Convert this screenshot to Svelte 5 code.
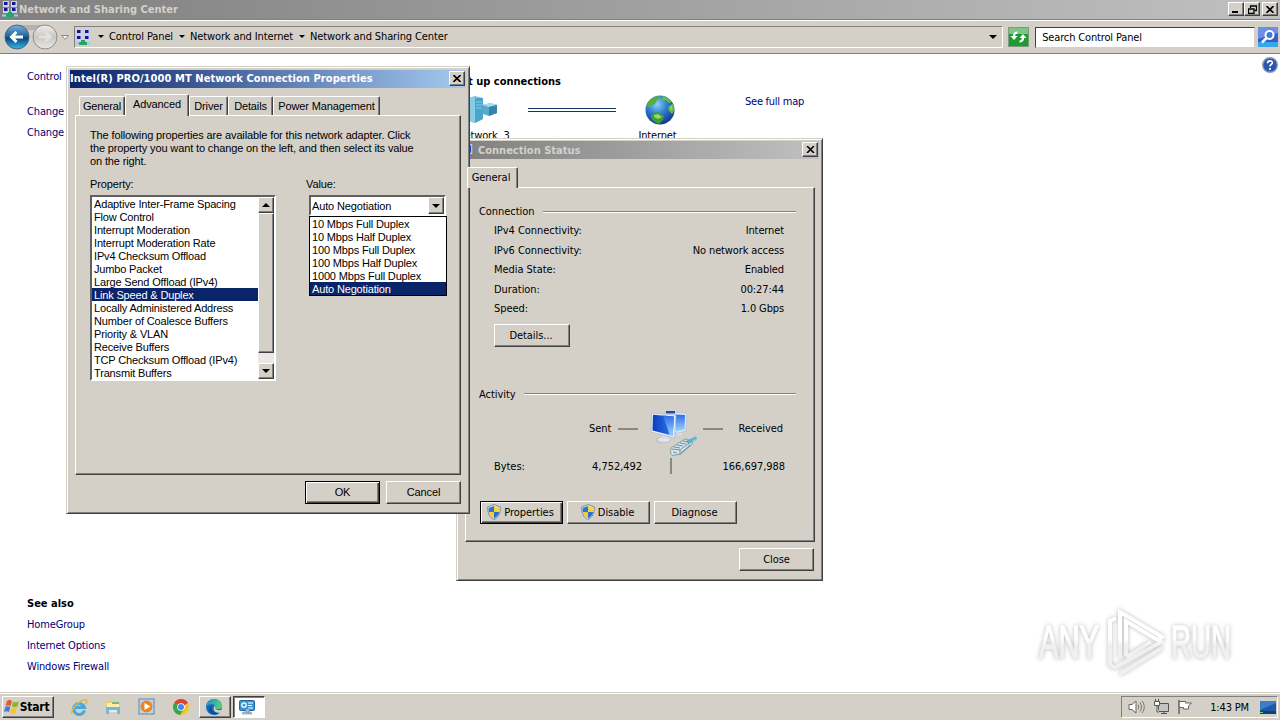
<script>
  const crumbs = ['Control Panel', 'Network and Internet', 'Network and Sharing Center']

  const tabs = ['General', 'Advanced', 'Driver', 'Details', 'Power Management']

  const adapterProps = [
    'Adaptive Inter-Frame Spacing',
    'Flow Control',
    'Interrupt Moderation',
    'Interrupt Moderation Rate',
    'IPv4 Checksum Offload',
    'Jumbo Packet',
    'Large Send Offload (IPv4)',
    'Link Speed & Duplex',
    'Locally Administered Address',
    'Number of Coalesce Buffers',
    'Priority & VLAN',
    'Receive Buffers',
    'TCP Checksum Offload (IPv4)',
    'Transmit Buffers'
  ]

  const speeds = [
    '10 Mbps Full Duplex',
    '10 Mbps Half Duplex',
    '100 Mbps Full Duplex',
    '100 Mbps Half Duplex',
    '1000 Mbps Full Duplex',
    'Auto Negotiation'
  ]

  const connection = [
    ['IPv4 Connectivity:', 'Internet'],
    ['IPv6 Connectivity:', 'No network access'],
    ['Media State:', 'Enabled'],
    ['Duration:', '00:27:44'],
    ['Speed:', '1.0 Gbps']
  ]

  let tab = $state('Advanced')
  let selected = $state('Link Speed & Duplex')
  let speed = $state('Auto Negotiation')
</script>

{#snippet closeGlyph()}
  <svg width="8" height="7" viewBox="0 0 8 7"><path d="M.5 0 7.5 7M7.5 0 .5 7" stroke="#000" stroke-width="1.6" /></svg>
{/snippet}

{#snippet arrow(up = false)}
  <svg class:up width="8" height="4" viewBox="0 0 8 4"><path d="M0 0h8L4 4z" /></svg>
{/snippet}

{#snippet networkIcon(size)}
  <svg width={size} height={size} viewBox="0 0 16 16">
    <path d="M1 0h6v6H1zM9 0h6v6H9zM1 7h6v5H1zM9 7h6v5H9z" fill="#ccd3e4" />
    <path d="M2 1h3v3H2zM10 1h3v3h-3zM2 7h3v3H2zM10 7h3v3h-3z" fill="#12129b" />
    <path d="M5 1h1v3H5zM13 1h1v3h-1zM5 7h1v3H5zM13 7h1v3h-1z" fill="#5f6fe0" />
    <path d="M6 11h4v2h2v3H4v-3h2z" fill="#23a768" />
    <path d="M0 14.500h4M12 14.500h4" stroke="#8cd7dd" stroke-width="2" />
  </svg>
{/snippet}

{#snippet shield()}
  <svg width="14" height="16" viewBox="0 0 14 16">
    <path d="M7 .5 13.3 3c.2 6-1.6 10.300-6.300 12.500C2.300 13.300.5 9 .7 3z" fill="#dfe6ee" stroke="#748ba8" />
    <path d="M7 2v6H1.800C1.600 6.500 1.700 5 1.700 3.900z" fill="#2f74cf" />
    <path d="M7 2v6h5.200c.2-1.500.1-3 .1-4.100z" fill="#f5d43b" />
    <path d="M7 8v6.400C4.200 13 2.300 11 1.800 8z" fill="#f5cc2e" />
    <path d="M7 8v6.400C9.800 13 11.700 11 12.200 8z" fill="#2c6fca" />
  </svg>
{/snippet}

<div class="desktop">
  <header class="titlebar main-title">
    {@render networkIcon(16)}
    <span>Network and Sharing Center</span>
    <div class="caption">
      <button aria-label="Minimize"><svg class="min" width="8" height="8" viewBox="0 0 8 8"><path d="M0 6h6v2H0z" /></svg></button>
      <button aria-label="Restore">
        <svg width="9" height="9" viewBox="0 0 9 9"><path d="M2.500 3V1h6v4.500H6.500M2 1h7" fill="none" stroke="#000" stroke-width="1.300" /><path d="M.5 4h5.500v4.500H.5zM0 4h6.500" fill="none" stroke="#000" stroke-width="1.300" /></svg>
      </button>
      <button class="gap" aria-label="Close">{@render closeGlyph()}</button>
    </div>
  </header>

  <nav class="toolbar">
    <svg class="travel" width="68" height="30" viewBox="0 0 68 30">
      <defs>
        <linearGradient id="back" x2="0" y2="1"><stop stop-color="#7ab3d9" /><stop offset=".45" stop-color="#24679f" /><stop offset=".55" stop-color="#0a477f" /><stop offset="1" stop-color="#35bce6" /></linearGradient>
        <linearGradient id="fwd" x2="0" y2="1"><stop stop-color="#efeeec" /><stop offset=".5" stop-color="#c9c7c3" /><stop offset="1" stop-color="#e9e8e6" /></linearGradient>
      </defs>
      <path d="M16 3h30v5H16z" fill="#b4b2ae" />
      <circle cx="16" cy="15" r="12" fill="url(#back)" stroke="#46637f" />
      <path d="M22 15H11M15.500 10 10.500 15l5 5" fill="none" stroke="#fff" stroke-width="3" />
      <circle cx="44" cy="15" r="12" fill="url(#fwd)" stroke="#8f8d8a" />
      <path d="M38 15h10M44.500 10.500l5 4.500-5 4.500" fill="none" stroke="#e3e1de" stroke-width="2.500" />
      <path d="M60.500 13.500h7L64 17.500z" fill="#f6f5f3" stroke="#8b8986" />
    </svg>
    <div class="address">
      {@render networkIcon(16)}
      {#each crumbs as crumb}
        <i>{@render arrow()}</i><span>{crumb}</span>
      {/each}
      <i class="drop">{@render arrow()}</i>
    </div>
    <svg class="refresh" width="21" height="20" viewBox="0 0 21 20">
      <rect x=".5" y=".5" width="20" height="19" fill="#1f9a30" stroke="#7d9a80" />
      <path d="M1 1h19v6H1z" fill="#7cc585" />
      <path d="M9.500 5.500C7 5.500 6 7 6 9.500M11.500 14.500c2.500 0 3.500-1.500 3.500-4" fill="none" stroke="#fff" stroke-width="2.200" />
      <path d="M2.500 9h7L6 13zM11.500 11h7L15 7z" fill="#fff" />
    </svg>
    <div class="search">Search Control Panel</div>
    <svg class="go" width="20" height="20" viewBox="0 0 20 20">
      <rect width="20" height="20" fill="#2e5fd3" /><path d="M0 0h20v6L0 12z" fill="#6b8fe4" /><path d="M0 20h20v-5H0z" fill="#36a8ea" />
      <circle cx="11.500" cy="8" r="4" fill="#3f78d8" stroke="#fff" stroke-width="2" /><path d="m8.500 11-4.500 4.500" stroke="#fff" stroke-width="2.500" />
    </svg>
  </nav>

  <main class="content">
    <aside>
      <a class="home" href="#home">Control</a>
      <a href="#adapter">Change</a>
      <a href="#sharing">Change</a>
      <h2>See also</h2>
      <a href="#homegroup">HomeGroup</a>
      <a href="#options">Internet Options</a>
      <a href="#firewall">Windows Firewall</a>
    </aside>
    <section class="overview">
      <h1>set up connections</h1>
      <div class="map">
        <figure class="net">
          <svg width="40" height="32" viewBox="0 0 40 32">
            <path d="m7 5 10-3 8 2v21l-8 4-10-3z" fill="#7fc8e3" /><path d="m17 4 8 0v21l-8 4z" fill="#4ba5cb" /><path d="m7 5 10-1v25L7 26z" fill="#8accE5" />
            <path d="m25 11 7-2 7 2v8l-8 3-6-2z" fill="#5aa9cd" /><path d="m25 11 7-2 7 2-8 2z" fill="#a3dbec" /><path d="m31 13 8-2v8l-8 3z" fill="#3384ad" />
            <path d="M18 8h6M18 11h6M18 14h6" stroke="#82cbe4" />
          </svg>
          <figcaption>Network&nbsp; 3</figcaption>
        </figure>
        <div class="wire"></div>
        <figure>
          <svg width="32" height="32" viewBox="0 0 32 32">
            <defs><radialGradient id="globe" cx=".4" cy=".3" r=".75"><stop stop-color="#8cd3f5" /><stop offset=".45" stop-color="#2f7ed2" /><stop offset="1" stop-color="#132d86" /></radialGradient></defs>
            <circle cx="16" cy="16" r="14.500" fill="url(#globe)" />
            <path d="M4 9c2-4 6-7 11-7l1 2-3 2-2 4-4 2-3 2c-1-2-1-3 0-5z" fill="#55ad48" />
            <path d="m19 2 5 2 4 4-3 1-3-3-3 1-1-3zM26 11l3-1c2 4 1 8-1 10l-3-3-1-3z" fill="#65bd3e" />
            <path d="M8 20l6-2 6 4-1 4-4 4c-4-1-7-4-8-7z" fill="#3e9c3d" />
            <path d="m10 21 4-1 4 3-4 2-4-2zM26 13l2-1v5z" fill="#97d95e" />
          </svg>
          <figcaption>Internet</figcaption>
        </figure>
        <a href="#map">See full map</a>
      </div>
    </section>
    <svg class="help" width="16" height="16" viewBox="0 0 16 16">
      <circle cx="8" cy="8" r="7.300" fill="#2857ad" stroke="#8c9bb6" stroke-width="1.400" />
      <path d="M5.600 6.200C5.600 3 10.500 3.200 10.300 5.900 10.100 7.500 8 7.500 8 9.500M8 11v2" fill="none" stroke="#fff" stroke-width="1.700" />
    </svg>
    <svg class="watermark" width="240" height="80" viewBox="0 0 240 80">
      <defs><linearGradient id="mark" gradientUnits="userSpaceOnUse" x1="0" x2="0" y1="8" y2="74"><stop offset=".45" stop-color="#fff" /><stop offset=".55" stop-color="#f0f0f0" /></linearGradient></defs>
      <g class="mark">
        <text x="9" y="57" textLength="60" lengthAdjust="spacingAndGlyphs">ANY</text>
        <text x="141" y="57" textLength="60" lengthAdjust="spacingAndGlyphs">RUN</text>
        <path d="M86 17l-6 3v44l6 3M90 57V11l42 25-4 3-32-19v35M96 56l25-15M84 67l7-4 42-23M90 73l42-26" />
      </g>
    </svg>
  </main>

  <div class="window status" role="dialog">
    <header class="titlebar">
      <svg width="16" height="16" viewBox="0 0 16 16"><path d="M1 2h12v10H1z" fill="#dce8f7" /><path d="M3 3h9v8H3z" fill="#224ac2" /></svg>
      <span>Connection Status</span>
      <div class="caption"><button aria-label="Close">{@render closeGlyph()}</button></div>
    </header>
    <div class="tabs"><div class="tab active">General</div></div>
    <div class="panel">
      <h3>Connection</h3>
      <dl>
        {#each connection as [label, value]}
          <dt>{label}</dt><dd>{value}</dd>
        {/each}
      </dl>
      <button class="btn details">Details...</button>
      <h3>Activity</h3>
      <div class="traffic">
        <span class="sent">Sent</span>
        <hr />
        <svg width="48" height="48" viewBox="0 0 48 48">
          <defs>
            <linearGradient id="screen" x2="1"><stop stop-color="#0d3cc0" /><stop offset="1" stop-color="#2f7cf0" /></linearGradient>
            <linearGradient id="shine" x2="0" y2="1"><stop stop-color="#2b6fe8" /><stop offset="1" stop-color="#9fd4fb" /></linearGradient>
          </defs>
          <ellipse cx="13" cy="30" rx="8" ry="3.500" fill="#c3c6cf" /><ellipse cx="14" cy="29.500" rx="6" ry="2.300" fill="#e2e5ea" />
          <path d="M12 24h6v5h-6zM27 21h5v4h-5z" fill="#d9dee6" />
          <path d="M15 1.500 36.500 3 36 21l-10 2.500z" fill="#dce9f8" stroke="#afbfd2" stroke-width=".8" /><path d="M16 1h9v2.500h-9z" fill="#2447b3" />
          <path d="m25 4.500 10 .5-.5 14.500-8.500 2z" fill="url(#shine)" />
          <path d="M1.500 3 26 5l-1.500 23L1 22z" fill="#e9f1fb" stroke="#a9bbd0" stroke-width=".8" />
          <path d="m3 4.800 21 1.700-1.300 19.200L2.500 20.500z" fill="url(#screen)" /><path d="m13 5.600 11 .9-1.300 19.200-3-.8z" fill="url(#shine)" />
          <path d="m21 38 14-9 7 2 .5 3-12 10-8 1.500L20.500 43z" fill="#d5e6ec" stroke="#6d8c9c" stroke-width=".8" />
          <path d="m37 32 9.500-4.500" stroke="#54b8de" stroke-width="2.800" /><path d="m38 35 9-5.500" stroke="#9cc9d8" />
          <path d="m22 39 8 1 12-9M30 40v5M24 37l6 1M27 35l6 1M30 33l6 1M33 31l6 1M23 42l4 1M31 43l9-8" fill="none" stroke="#56788a" stroke-width=".8" />
        </svg>
        <hr />
        <span>Received</span>
      </div>
      <div class="bytes"><span>Bytes:</span><b>4,752,492</b><i></i><b>166,697,988</b></div>
      <div class="actions">
        <button class="btn default">{@render shield()}Properties</button>
        <button class="btn">{@render shield()}Disable</button>
        <button class="btn">Diagnose</button>
      </div>
    </div>
    <div class="foot"><button class="btn">Close</button></div>
  </div>

  <div class="window properties" role="dialog">
    <header class="titlebar">
      <span>Intel(R) PRO/1000 MT Network Connection Properties</span>
      <div class="caption"><button aria-label="Close">{@render closeGlyph()}</button></div>
    </header>
    <div class="tabs">
      {#each tabs as name}
        <button class="tab" class:active={tab === name} onclick={() => (tab = name)}>{name}</button>
      {/each}
    </div>
    <div class="panel">
      <p>The following properties are available for this network adapter. Click<br />the property you want to change on the left, and then select its value<br />on the right.</p>
      <div class="fields">
        <div>
          <div class="label">Property:</div>
          <div class="listbox">
            <ul>
              {#each adapterProps as prop}
                <li class:selected={selected === prop}><button onclick={() => (selected = prop)}>{prop}</button></li>
              {/each}
            </ul>
            <div class="scroll">
              <span class="knob">{@render arrow(true)}</span>
              <span class="thumb"></span>
              <span class="knob">{@render arrow()}</span>
            </div>
          </div>
        </div>
        <div class="value">
          <div class="label">Value:</div>
          <div class="combo"><span>{speed}</span><i class="knob">{@render arrow()}</i></div>
          <ul class="menu">
            {#each speeds as item}
              <li class:selected={speed === item}><button onclick={() => (speed = item)}>{item}</button></li>
            {/each}
          </ul>
        </div>
      </div>
    </div>
    <div class="foot">
      <button class="btn default">OK</button>
      <button class="btn">Cancel</button>
    </div>
  </div>

  <footer class="taskbar">
    <button class="btn start">
      <svg width="16" height="16" viewBox="0 0 16 16">
        <path d="M3 2c2-1.500 3.500-1 5 0L6.700 7C5 6 3.500 6 1.500 7z" fill="#e8562b" /><path d="M9 2.500c2 1 3.500 1 6 0L13.500 7.500c-2 1-4 1-5.500 0z" fill="#7fba35" />
        <path d="M1.300 8c2-1.300 3.500-1 5 0L5 13c-1.500-1-3-1-5 0z" fill="#3c80d4" /><path d="M7.500 8.500c2 1 3.500 1 5.500 0L11.700 14c-2 1-4 1-5.500-.5z" fill="#f7c331" />
      </svg>Start
    </button>
    <div class="quick">
      <svg viewBox="0 0 18 18">
        <path d="M14.500 12.500A5.500 5.500 0 1 1 14.500 9.500H5" fill="none" stroke="#45a9e1" stroke-width="3" />
        <path d="M2 16C0 12 11 0 16 2c1.500 1 .5 3-.5 4" fill="none" stroke="#e6b642" stroke-width="1.500" />
      </svg>
      <svg viewBox="0 0 18 18">
        <path d="M2 3h5l1 2h8v9H2z" fill="#eccd6c" /><path d="M3 5h12v6H3z" fill="#fff0a8" /><path d="M8 4h7v2H8z" fill="#79b974" />
        <path d="M2 9h14v7h-3v-4H5v4H2z" fill="#77b8da" /><path d="M5 12h8v2H5z" fill="#d7eff8" />
      </svg>
      <svg viewBox="0 0 18 18">
        <rect x="1" y="1" width="15" height="15" fill="#b9d6ea" stroke="#5487b3" /><circle cx="8.500" cy="8.500" r="6" fill="#f08320" /><path d="m6.500 5 6 3.500-6 3.500z" fill="#fff" />
      </svg>
      <svg viewBox="0 0 18 18">
        <circle cx="9" cy="9" r="8" fill="#f4c52a" /><path d="M9 9 2.100 5A8 8 0 0 1 16 5z" fill="#dc4335" /><path d="M9 9 2.100 5A8 8 0 0 0 8 17l4-6z" fill="#35a552" /><circle cx="9" cy="9" r="3.800" fill="#fff" /><circle cx="9" cy="9" r="3" fill="#4285f4" />
      </svg>
    </div>
    <button class="btn task" aria-label="Edge">
      <svg width="18" height="18" viewBox="0 0 18 18">
        <defs><linearGradient id="edge" x2="1" y2=".3"><stop stop-color="#1c8bd5" /><stop offset="1" stop-color="#55cf75" /></linearGradient></defs>
        <circle cx="9" cy="9" r="8" fill="#176bc0" /><path d="M1 9C2-1 17-1 17 8c0 4-6 4-7 2 1-4-5-6-9-1z" fill="url(#edge)" /><path d="M7 8c-2 4 2 8 8 6-3 4-9 3-11-1-1-2 1-5 3-5z" fill="#0e4f9f" /><path d="M9 8.500c2 0 1 2 2 3 2 1 4 1 6 0l-1.500 3c-4 1-8-1-6.500-6z" fill="#d4d0c8" />
      </svg>
    </button>
    <button class="btn task pressed" aria-label="Control Panel">
      <svg width="17" height="16" viewBox="0 0 17 16">
        <rect x=".5" y="1.500" width="15" height="10" rx="1" fill="#3993ce" stroke="#286a9d" /><circle cx="5" cy="6" r="2.200" fill="none" stroke="#fff" stroke-width="1.300" /><path d="M9 4h5M9 6.500h4M9 9h5" stroke="#fff" /><path d="M4 13h8l1 2H3zM7 10h3v4H7z" fill="#abcde3" stroke="#688ca6" stroke-width=".6" />
      </svg>
    </button>
    <div class="tray">
      <svg width="17" height="16" viewBox="0 0 17 16"><path d="M1 5.500h3L8 2v12l-4-3.500H1z" fill="#fff" stroke="#666" /><path d="M10 5.500c1 1.500 1 3.500 0 5M12 3.500c2 3 2 6 0 9M14 2c3 4 3 8 0 12" fill="none" stroke="#777" /></svg>
      <svg width="16" height="16" viewBox="0 0 16 16"><path d="M5.500 4.500h10v8h-10zM8 14.500h6M11 13v2" fill="#c4c4c4" stroke="#555" /><path d="M1.500 2.500h5v4h-5zM2.500 0v2M5.500 0v2M4 7v6h2" fill="#fff" stroke="#555" /></svg>
      <svg width="16" height="16" viewBox="0 0 16 16"><path d="M2.500 2.500h6v1.500h6l-3 3 0 3h-5V8.500h-4" fill="#fff" stroke="#666" /><path d="M2 1v14" stroke="#666" stroke-width="1.500" /></svg>
      <time>1:43 PM</time>
      <svg class="peek" width="16" height="13" viewBox="0 0 16 13"><path d="M0 0h16v11H0z" fill="#2058a8" /><path d="M0 0h16v2L0 9z" fill="#3f7dcb" /><path d="M0 10h16v3H0z" fill="#123e7d" /><path d="M0 11.500h3" stroke="#79c86d" /></svg>
    </div>
  </footer>
</div>

<style>
  :global(body) {
    overflow: hidden;
  }

  .desktop {
    position: relative;
    display: flex;
    flex-direction: column;
    width: 1280px;
    height: 720px;
    background: #fff;
    color: #000;
    font: 11px/13px "DejaVu Sans Condensed", "DejaVu Sans", sans-serif;
    font-stretch: condensed;
    letter-spacing: -0.15px;
    white-space: nowrap;
  }

  .desktop :global(*) {
    box-sizing: border-box;
  }

  svg {
    display: block;
    flex: none;
  }

  .up {
    transform: rotate(180deg);
  }

  button {
    padding: 0;
    border: 0;
    background: none;
    color: inherit;
    font: inherit;
    letter-spacing: inherit;
  }

  h1, h2, h3, p, ul, dl, dd, figure, hr {
    margin: 0;
    padding: 0;
    list-style: none;
    font-size: 11px;
  }

  i, b {
    font-style: normal;
    font-weight: normal;
  }

  a {
    color: #00007a;
    text-decoration: none;
  }

  .titlebar {
    display: flex;
    align-items: center;
    height: 18px;
    flex: none;
    background: linear-gradient(90deg, #808080, #c0c0c0);
    color: #d4d0c8;
    font-weight: bold;
    letter-spacing: 0;
  }

  .main-title {
    height: 19px;
    padding: 0 2px 1px;
    gap: 1px;
  }

  .caption {
    display: flex;
    margin-left: auto;
  }

  .caption button {
    display: grid;
    place-items: center;
    width: 16px;
    height: 14px;
    background: #d4d0c8;
    border: 1px solid;
    border-color: #fff #404040 #404040 #fff;
    box-shadow: inset -1px -1px #808080;
  }

  .caption .gap {
    margin-left: 2px;
  }

  .toolbar {
    display: flex;
    align-items: center;
    height: 35px;
    flex: none;
    padding: 1px 2px 0 1px;
    background: #d4d0c8;
    border-top: 1px solid #808080;
    border-bottom: 1px solid #808080;
    box-shadow: inset 0 1px #fff;
  }

  .address {
    display: flex;
    align-items: center;
    width: 930px;
    height: 22px;
    margin: -1px 0 0 5px;
    border: 1px solid;
    border-color: #808080 #fff #fff #808080;
    letter-spacing: -0.12px;
  }

  .address i {
    width: 17px;
    padding: 0 0 0 7px;
  }

  .address i svg {
    width: 6px;
    height: 3px;
  }

  .address span + i {
    padding-left: 6px;
  }

  .address i:first-of-type {
    width: 18px;
  }

  .address .drop {
    margin-left: auto;
    margin-right: 2px;
  }

  .address .drop svg {
    width: 8px;
    height: 4px;
  }

  .refresh {
    margin-left: 5px;
  }

  .search {
    width: 220px;
    height: 21px;
    margin: 0 3px 0 6px;
    padding: 3px 0 0 6px;
    background: #fff;
    border: 1px solid;
    border-color: #404040 #d4d0c8 #d4d0c8 #404040;
  }

  .content {
    display: flex;
    flex: 1;
    position: relative;
  }

  aside {
    display: flex;
    flex-direction: column;
    gap: 8px;
    width: 185px;
    padding: 16px 0 0 27px;
  }

  .home {
    margin-bottom: 14px;
  }

  h2 {
    margin: 450px 0 0;
    letter-spacing: 0;
  }

  .overview {
    width: 620px;
    padding-top: 21px;
  }

  h1 {
    width: 376px;
    text-align: right;
    letter-spacing: 0;
  }

  .map {
    display: flex;
    padding: 6px 0 0 249px;
  }

  figure {
    width: 62px;
    text-align: center;
  }

  figure svg {
    margin: 0 auto 3px;
  }

  figcaption {
    margin-left: -5px;
  }

  .net {
    width: 79px;
    margin-left: 10px;
  }

  .net svg {
    margin-left: 14px;
  }

  .net figcaption {
    margin-left: 0;
  }

  .wire {
    width: 88px;
    height: 4px;
    margin: 14px 13px 0 5px;
    border: solid #10356b;
    border-width: 1px 0;
  }

  .map a {
    margin: 1px 0 0 54px;
    letter-spacing: -0.25px;
  }

  .help {
    margin: 3px 2px 0 auto;
  }

  .watermark {
    position: absolute;
    left: 1030px;
    top: 547px;
  }

  .mark {
    fill: url(#mark);
    stroke: url(#mark);
    stroke-width: 1.5;
    filter: drop-shadow(0 0 2px #bbb);
    font: 46px "Liberation Sans", sans-serif;
    letter-spacing: 0;
  }

  .mark path {
    fill: none;
    stroke-width: 4;
  }

  .window {
    position: absolute;
    display: flex;
    flex-direction: column;
    background: #d4d0c8;
    border: 1px solid;
    border-color: #d4d0c8 #404040 #404040 #d4d0c8;
    box-shadow: inset 1px 1px #fff, inset -1px -1px #808080;
    padding: 2px 3px;
  }

  .window .caption button {
    width: 16px;
    height: 15px;
    margin: -1px 1px 0 0;
  }

  .tabs {
    display: flex;
    align-items: flex-end;
  }

  .tab {
    height: 19px;
    border: 1px solid;
    border-color: #fff #404040 transparent #fff;
    border-bottom: 0;
    border-radius: 2px 2px 0 0;
    box-shadow: inset -1px 0 #808080;
    text-align: center;
  }

  .tab.active {
    position: relative;
    z-index: 1;
    height: 22px;
    margin-bottom: -1px;
    padding-bottom: 2px;
    background: #d4d0c8;
  }

  .panel {
    border: 1px solid;
    border-color: #fff #404040 #404040 #fff;
    box-shadow: inset -1px -1px #808080;
  }

  .btn {
    display: flex;
    align-items: center;
    justify-content: center;
    gap: 3px;
    width: 75px;
    height: 23px;
    background: #d4d0c8;
    border: 1px solid;
    border-color: #fff #404040 #404040 #fff;
    box-shadow: inset -1px -1px #808080;
  }

  .btn.default {
    border-color: #000;
    box-shadow: inset 1px 1px #fff, inset -1px -1px #404040, inset -2px -2px #808080;
  }

  .foot {
    display: flex;
    justify-content: flex-end;
    gap: 6px;
    padding: 6px 5px 0 0;
  }

  .status {
    left: 456px;
    top: 138px;
    width: 367px;
    height: 443px;
    letter-spacing: -0.05px;
  }

  .status .titlebar {
    gap: 3px;
    padding-left: 0;
  }

  .status .titlebar svg:first-child {
    width: 15px;
  }

  .status .tabs {
    padding: 8px 0 0 7px;
  }

  .status .tab {
    width: 51px;
    height: 21px;
    padding: 3px 3px 0 0;
  }

  .status .panel {
    width: 350px;
    height: 355px;
    margin-left: 5px;
    padding: 17px 18px 0 13px;
  }

  h3 {
    display: flex;
    align-items: center;
    gap: 8px;
    font-weight: normal;
  }

  h3::after {
    content: "";
    flex: 1;
    height: 1px;
    background: #808080;
    border-bottom: 1px solid #fff;
  }

  dl {
    display: grid;
    grid-template-columns: 1fr auto;
    grid-auto-rows: 19.5px;
    padding: 3px 12px 0 15px;
    align-items: center;
  }

  dd {
    text-align: right;
    letter-spacing: -0.12px;
  }

  .details {
    width: 76px;
    margin: 5px 0 41px 15px;
    padding-right: 2px;
  }

  .traffic {
    display: flex;
    align-items: center;
    justify-content: flex-end;
    height: 48px;
    margin-top: 9px;
    padding-right: 13px;
  }

  .traffic svg {
    margin: 0 5px 0 12px;
  }

  .traffic > span {
    margin-bottom: 11px;
  }

  .traffic .sent {
    margin-right: 7px;
  }

  hr {
    width: 20px;
    height: 2px;
    margin-bottom: 9px;
    border: 0;
    background: #8c8880;
  }

  hr + span {
    margin-left: 15px;
  }

  .bytes {
    display: grid;
    grid-template-columns: 70px 78px 59px 84px;
    align-items: center;
    height: 17px;
    margin: 0 0 0 15px;
    text-align: right;
  }

  .bytes span {
    text-align: left;
  }

  .bytes i {
    width: 2px;
    height: 16px;
    margin-left: 28px;
    background: #8c8880;
  }

  .actions {
    display: flex;
    gap: 4px;
    margin: 26px 0 0 1px;
  }

  .actions .btn {
    width: 83px;
    padding-right: 2px;
  }

  .properties {
    left: 66px;
    top: 66px;
    width: 404px;
    height: 448px;
    font-family: "Liberation Sans", sans-serif;
    font-stretch: normal;
    letter-spacing: -0.13px;
  }

  .properties .titlebar {
    margin-top: 1px;
    background: linear-gradient(90deg, #0a246a, #a6caf0);
    color: #fff;
    font-family: "DejaVu Sans Condensed", "DejaVu Sans", sans-serif;
    font-stretch: condensed;
    letter-spacing: 0.08px;
  }

  .properties .titlebar span {
    margin-bottom: 2px;
  }

  .properties .tabs {
    padding: 6px 0 0 9px;
  }

  .properties .tab:nth-child(1) {
    width: 46px;
  }

  .properties .tab:nth-child(2) {
    width: 64px;
  }

  .properties .tab:nth-child(3) {
    width: 39px;
  }

  .properties .tab:nth-child(4) {
    width: 45px;
  }

  .properties .tab:nth-child(5) {
    width: 107px;
  }

  .properties .panel {
    width: 386px;
    height: 360px;
    margin-left: 5px;
    padding: 13px 14px;
  }

  .properties .foot .btn {
    padding-bottom: 1px;
  }

  .fields {
    display: flex;
    gap: 30px;
    padding-top: 10px;
  }

  .label {
    margin-bottom: 4px;
  }

  .listbox {
    display: flex;
    width: 186px;
    height: 186px;
    background: #fff;
    border: 2px solid;
    border-color: #606060 #fff #fff #606060;
  }

  .listbox ul {
    flex: 1;
  }

  li {
    height: 13px;
    padding-left: 2px;
    letter-spacing: -0.16px;
  }

  li button {
    display: block;
    padding-top: 1px;
    line-height: 12px;
  }

  li.selected {
    background: #0a246a;
    color: #fff;
  }

  .scroll {
    display: flex;
    flex-direction: column;
    justify-content: space-between;
    width: 16px;
    background: #eae8e4;
  }

  .knob, .thumb {
    display: grid;
    place-items: center;
    width: 16px;
    height: 16px;
    background: #d4d0c8;
    border: 1px solid;
    border-color: #fff #404040 #404040 #fff;
    box-shadow: inset -1px -1px #808080;
  }

  .thumb {
    height: 140px;
    margin-bottom: 10px;
  }

  .value {
    position: relative;
    width: 141px;
  }

  .combo {
    display: flex;
    justify-content: space-between;
    width: 137px;
    height: 21px;
    margin-left: 3px;
    background: #fff;
    border: 2px solid;
    border-color: #606060 #fff #fff #606060;
  }

  .combo span {
    padding: 3px 0 0 1px;
  }

  .combo .knob {
    height: 17px;
  }

  .menu {
    position: absolute;
    left: 3px;
    top: 38px;
    width: 138px;
    background: #fff;
    border: 1px solid #000;
  }

  .taskbar {
    display: flex;
    align-items: center;
    height: 28px;
    flex: none;
    padding: 2px 2px 0;
    background: #d4d0c8;
    box-shadow: inset 0 1px #d4d0c8, inset 0 2px #fff;
  }

  .start {
    width: 52px;
    height: 22px;
    gap: 0;
    padding-right: 3px;
    font-weight: bold;
    font-size: 12px;
    letter-spacing: -0.2px;
  }

  .quick {
    display: flex;
    gap: 16px;
    padding: 0 9px 0 16px;
  }

  .quick svg {
    width: 18px;
    height: 18px;
  }

  .task {
    width: 32px;
    height: 22px;
    margin-right: 2px;
    padding-right: 2px;
  }

  .task.pressed {
    padding-right: 4px;
    background: #fff;
    border-color: #404040 #fff #fff #404040;
    box-shadow: inset 1px 1px #808080;
  }

  .tray {
    display: flex;
    align-items: center;
    gap: 8px;
    width: 157px;
    height: 22px;
    margin-left: auto;
    padding: 0 1px 0 6px;
    border: 1px solid;
    border-color: #808080 #fff #fff #808080;
  }

  .tray time {
    margin: 0 3px 0 auto;
  }
</style>
